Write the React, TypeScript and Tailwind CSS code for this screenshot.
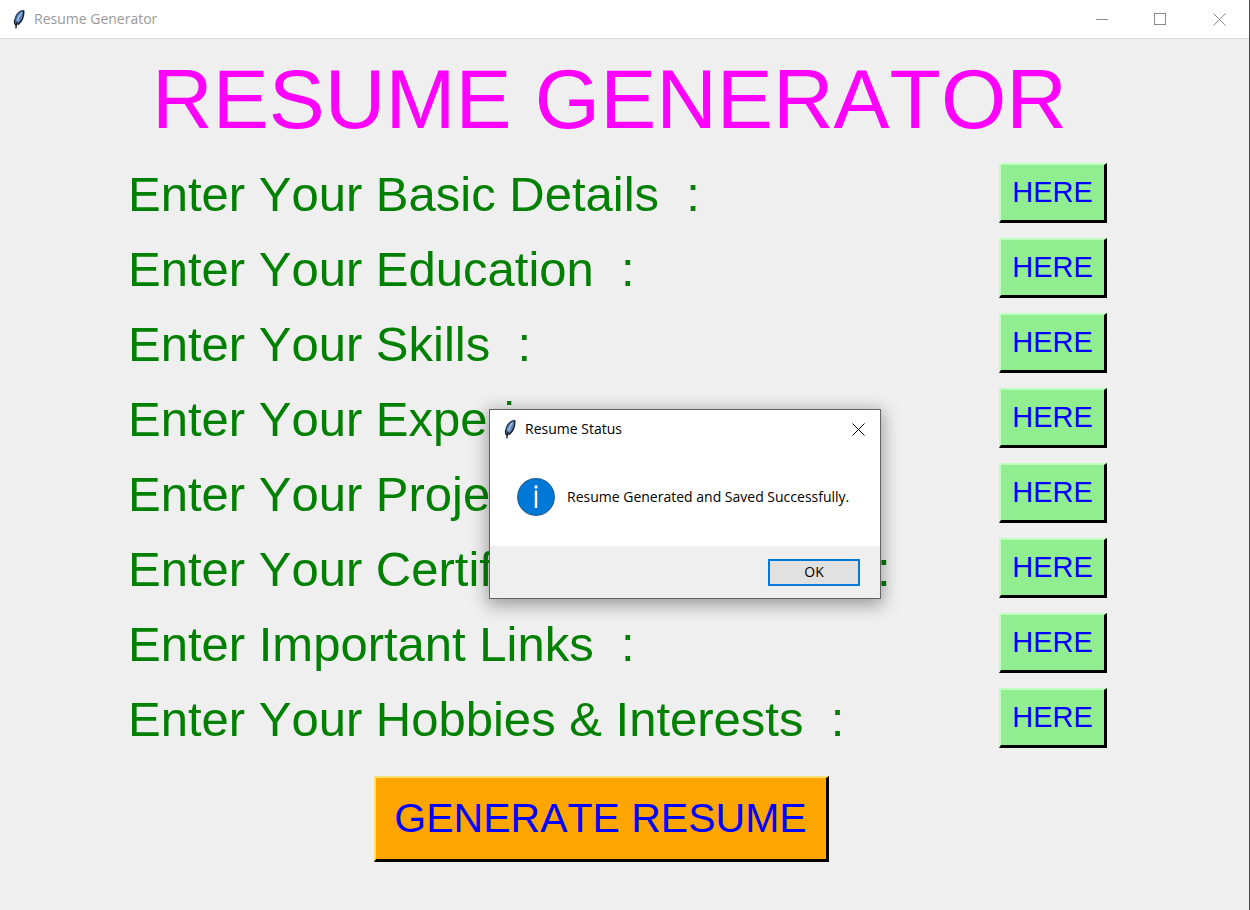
import React from "react";

const SECTIONS = [
  "Enter Your Basic Details",
  "Enter Your Education",
  "Enter Your Skills",
  "Enter Your Experience",
  "Enter Your Projects",
  "Enter Your Certifications, Awards",
  "Enter Important Links",
  "Enter Your Hobbies & Interests",
];

function Feather({ className }: { className: string }) {
  return (
    <svg viewBox="0 0 14 20" className={className} aria-hidden="true">
      <path
        d="M11.6 0.8 C8 1 4.2 4 2.8 8.5 C2 11.3 2 14 3.2 16.4 L5.6 15.8 C8.6 14 10.2 11 11 7.6 C11.5 5.2 12.4 2.6 11.6 0.8 Z"
        fill="#5b83b5"
      />
      <path d="M10.8 1.6 C6.5 3 3.6 6.8 3 11.5" fill="none" stroke="#31435c" strokeWidth="1.2" />
      <path d="M9.6 3.6 C7.2 6.4 5.9 9.8 5.2 13" fill="none" stroke="#a3c3ea" strokeWidth="1.4" />
      <path d="M11.8 1.2 C12 5.5 10.6 12 6 15.6" fill="none" stroke="#141b28" strokeWidth="1.4" />
      <path d="M2.6 11 C2.3 13 2.8 15 3.6 16.2 M5.4 12.5 C4.6 14.5 4.2 16.6 3.8 19.4" fill="none" stroke="#15181e" strokeWidth="1.4" />
    </svg>
  );
}

function Cross() {
  return (
    <svg viewBox="0 0 13 13" className="h-[13px] w-[13px]" aria-hidden="true">
      <path d="M0.5 0.5 L12.5 12.5 M12.5 0.5 L0.5 12.5" stroke="currentColor" strokeWidth="1" />
    </svg>
  );
}

function TitleBar() {
  return (
    <header className="flex h-[39px] items-center border-b border-[#d9d9d9] bg-white pl-3 text-[#999999]">
      <Feather className="h-5 w-[14px]" />
      <span className="ml-2 grow text-[14px] leading-5">Resume Generator</span>
      <div className="flex h-full">
        <button aria-label="Minimize" className="flex w-[58px] items-center justify-center">
          <span className="h-px w-3 bg-[#8c8c8c]" />
        </button>
        <button aria-label="Maximize" className="flex w-[58px] items-center justify-center">
          <span className="h-3 w-3 border border-[#8c8c8c]" />
        </button>
        <button aria-label="Close" className="flex w-[60px] items-center justify-center text-[#8c8c8c]">
          <Cross />
        </button>
      </div>
    </header>
  );
}

function StatusDialog() {
  return (
    <div
      role="dialog"
      aria-labelledby="status-title"
      className="absolute top-[409px] left-[489px] w-[392px] border border-[#636363] bg-white text-black shadow-[0_4px_16px_2px_rgba(0,0,0,0.35)]"
    >
      <div className="flex h-[38px] items-center pr-[15px] pl-[13px]">
        <Feather className="h-5 w-[14px]" />
        <h2 id="status-title" className="ml-2 grow text-[14px] leading-5">
          Resume Status
        </h2>
        <button aria-label="Close dialog">
          <Cross />
        </button>
      </div>
      <div className="flex h-[98px] items-center gap-3 pl-[27px]">
        <svg viewBox="0 0 38 38" className="h-[38px] w-[38px] shrink-0" aria-hidden="true">
          <circle cx="19" cy="19" r="18.3" fill="#0078d7" stroke="#1c5f9c" strokeWidth="1.2" />
          <rect x="17.6" y="7.5" width="2.8" height="3" fill="white" />
          <rect x="17.8" y="12.5" width="2.4" height="17.5" fill="white" />
        </svg>
        <p className="text-[14px] leading-5 whitespace-nowrap">Resume Generated and Saved Successfully.</p>
      </div>
      <div className="flex h-[52px] items-center justify-end bg-[#efefef] pr-5">
        <button className="h-[27px] w-[92px] border-2 border-[#0078d7] bg-[#e1e1e1] text-[14px] leading-5">OK</button>
      </div>
    </div>
  );
}

export default function App() {
  return (
    <div className="relative min-h-screen border-r border-[#4a4a4a] bg-[#efefef] font-['Open_Sans','Noto_Sans',sans-serif]">
      <TitleBar />
      <main className="flex flex-col pr-[142px] pl-32 font-['Liberation_Sans',Arial,sans-serif] [font-kerning:none]">
        <h1 className="mt-3 mr-4 text-center text-[84px] leading-[96px] whitespace-nowrap text-[#ff00ff]">
          RESUME GENERATOR
        </h1>
        <ul className="mt-4 flex flex-col gap-[15px]">
          {SECTIONS.map((label, i) => (
            <li key={label} className="flex h-[60px] items-center justify-between">
              <span id={`section-${i}`} className="pt-0.5 text-[49px] leading-[58px] whitespace-pre text-[#008000]">
                {label + "  :"}
              </span>
              <button
                aria-describedby={`section-${i}`}
                className="h-[60px] w-[108px] border-t-2 border-r-3 border-b-3 border-l-2 border-t-[#bdffbd] border-r-black border-b-black border-l-[#bdffbd] bg-[#90ee90] pb-0.5 text-[29px] leading-9 text-[#0000ff]"
              >
                HERE
              </button>
            </li>
          ))}
        </ul>
        <button className="mt-7 mr-[33px] h-[86px] w-[455px] self-center border-t-2 border-r-3 border-b-3 border-l-2 border-t-[#ffdf70] border-r-black border-b-black border-l-[#ffdf70] bg-[#ffa500] pb-0.5 text-[41px] leading-[48px] whitespace-nowrap text-[#0000ff]">
          GENERATE RESUME
        </button>
      </main>
      <StatusDialog />
    </div>
  );
}
